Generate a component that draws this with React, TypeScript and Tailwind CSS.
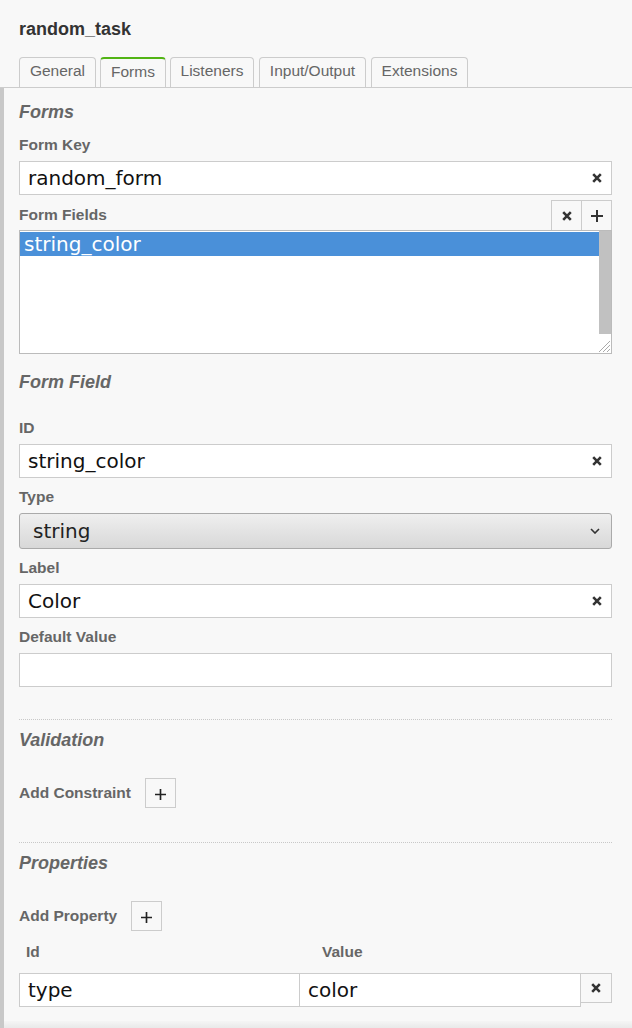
import React from "react";

const XIcon = ({ size = 10, sw = 2.6 }: { size?: number; sw?: number }) => (
  <svg width={size} height={size} viewBox="0 0 10 10">
    <path d="M1.2 1.2L8.8 8.8M8.8 1.2L1.2 8.8" stroke="#333" strokeWidth={sw} />
  </svg>
);

const PlusIcon = ({ size = 12, sw = 2, color = "#333" }: { size?: number; sw?: number; color?: string }) => (
  <svg width={size} height={size} viewBox="0 0 12 12">
    <path d="M6 0V12M0 6H12" stroke={color} strokeWidth={sw} />
  </svg>
);

const Label = ({ children, className = "" }: { children: React.ReactNode; className?: string }) => (
  <div className={`text-[15.5px] font-bold leading-[20px] text-[#666] ${className}`}>{children}</div>
);

const Heading = ({ children, className = "" }: { children: React.ReactNode; className?: string }) => (
  <div className={`text-[18px] font-bold italic leading-[24px] text-[#666] ${className}`}>{children}</div>
);

const TextInput = ({ value, clear = true, className = "" }: { value: string; clear?: boolean; className?: string }) => (
  <div className={`flex h-[34px] items-center border border-[#ccc] bg-white ${className}`}>
    <span className="flex-1 pl-[8px] font-['DejaVu_Sans',sans-serif] text-[20px] leading-none text-[#111]">{value}</span>
    {clear && (
      <span className="mr-[9px] flex">
        <XIcon />
      </span>
    )}
  </div>
);

const Tab = ({ label, w, active = false, className = "" }: { label: string; w: string; active?: boolean; className?: string }) => (
  <div
    className={`flex h-[30px] items-center justify-center rounded-t-[4px] border-x border-[#ccc] bg-[#f8f8f8] pb-[3px] text-[15.5px] text-[#666] ${w} ${
      active ? "border-t-2 border-t-[#52b415]" : "border-t"
    } ${className}`}
  >
    {label}
  </div>
);

export default function App() {
  return (
    <div className="flex h-[1028px] w-[632px] flex-col overflow-hidden bg-[#f8f8f8] font-['Liberation_Sans',Arial,sans-serif]">
      <div className="pl-[19px] pt-[19px] text-[18px] font-bold leading-[20px] text-[#333]">random_task</div>
      <div className="mt-[18px] flex border-b border-[#ccc] pl-[19px]">
        <Tab label="General" w="w-[77px]" />
        <Tab label="Forms" w="w-[66px]" active className="ml-[4px]" />
        <Tab label="Listeners" w="w-[84px]" className="ml-[4px]" />
        <Tab label="Input/Output" w="w-[107px]" className="ml-[5px]" />
        <Tab label="Extensions" w="w-[97px]" className="ml-[5px]" />
      </div>
      <div className="flex flex-1 flex-col border-l-[4px] border-[#c8c8c8] pl-[15px] pr-[20px]">
        <Heading className="mt-[12px]">Forms</Heading>
        <Label className="mt-[11px]">Form Key</Label>
        <TextInput value="random_form" className="mt-[6px]" />
        <div className="mt-[5px] flex h-[30px] items-center">
          <Label className="flex-1">Form Fields</Label>
          <div className="flex h-[30px] w-[31px] items-center justify-center border-x border-t border-[#ccc]">
            <XIcon />
          </div>
          <div className="flex h-[30px] w-[30px] items-center justify-center border-r border-t border-[#ccc]">
            <PlusIcon />
          </div>
        </div>
        <div className="relative flex h-[124px] border border-[#bbb] bg-white">
          <div className="flex-1">
            <div className="mt-[1px] flex h-[24px] items-center bg-[#4a90d9] pl-[4px] font-['DejaVu_Sans',sans-serif] text-[20px] leading-none text-white">
              string_color
            </div>
          </div>
          <div className="w-[12px]">
            <div className="h-[103px] bg-[#c1c1c1]" />
          </div>
          <svg className="absolute bottom-[1px] right-[1px]" width="13" height="13" viewBox="0 0 13 13">
            <path d="M13 2L2 13M13 6L6 13M13 10L10 13" stroke="#aaa" strokeWidth="1" />
          </svg>
        </div>
        <Heading className="mt-[16px]">Form Field</Heading>
        <Label className="mt-[24px]">ID</Label>
        <TextInput value="string_color" className="mt-[6px]" />
        <Label className="mt-[9px]">Type</Label>
        <div className="mt-[6px] flex h-[36px] items-center rounded-[3px] border border-[#aaa] bg-gradient-to-b from-[#efefef] to-[#d8d8d8]">
          <span className="flex-1 pl-[13px] font-['DejaVu_Sans',sans-serif] text-[20px] leading-none text-[#222]">string</span>
          <svg className="mr-[11px]" width="10" height="6" viewBox="0 0 10 6">
            <path d="M1 1L5 5L9 1" stroke="#333" strokeWidth="1.6" fill="none" />
          </svg>
        </div>
        <Label className="mt-[9px]">Label</Label>
        <TextInput value="Color" className="mt-[6px]" />
        <Label className="mt-[9px]">Default Value</Label>
        <TextInput value="" clear={false} className="mt-[6px]" />
        <div className="mt-[32px] border-t border-dotted border-[#c8c8c8]" />
        <Heading className="mt-[8px]">Validation</Heading>
        <div className="mt-[26px] flex h-[30px] items-center">
          <Label>Add Constraint</Label>
          <div className="ml-[14px] flex h-[30px] w-[31px] items-center justify-center border border-[#ccc] pt-[3px]">
            <PlusIcon size={11} sw={1.8} color="#222" />
          </div>
        </div>
        <div className="mt-[34px] border-t border-dotted border-[#c8c8c8]" />
        <Heading className="mt-[8px]">Properties</Heading>
        <div className="mt-[26px] flex h-[30px] items-center">
          <Label>Add Property</Label>
          <div className="ml-[14px] flex h-[30px] w-[31px] items-center justify-center border border-[#ccc] pt-[3px]">
            <PlusIcon size={11} sw={1.8} color="#222" />
          </div>
        </div>
        <div className="mt-[11px] flex">
          <Label className="w-[281px] pl-[7px]">Id</Label>
          <Label className="pl-[22px]">Value</Label>
        </div>
        <div className="mt-[11px] flex items-start">
          <TextInput value="type" clear={false} className="w-[281px]" />
          <TextInput value="color" clear={false} className="w-[281px] border-l-0" />
          <div className="flex h-[30px] w-[31px] items-center justify-center border border-l-0 border-[#ccc]">
            <XIcon />
          </div>
        </div>
        <div className="flex-1" />
        <div className="-ml-[15px] -mr-[20px] h-[7px] bg-gradient-to-b from-[#f5f5f5] to-[#e9e9e9]" />
      </div>
    </div>
  );
}
